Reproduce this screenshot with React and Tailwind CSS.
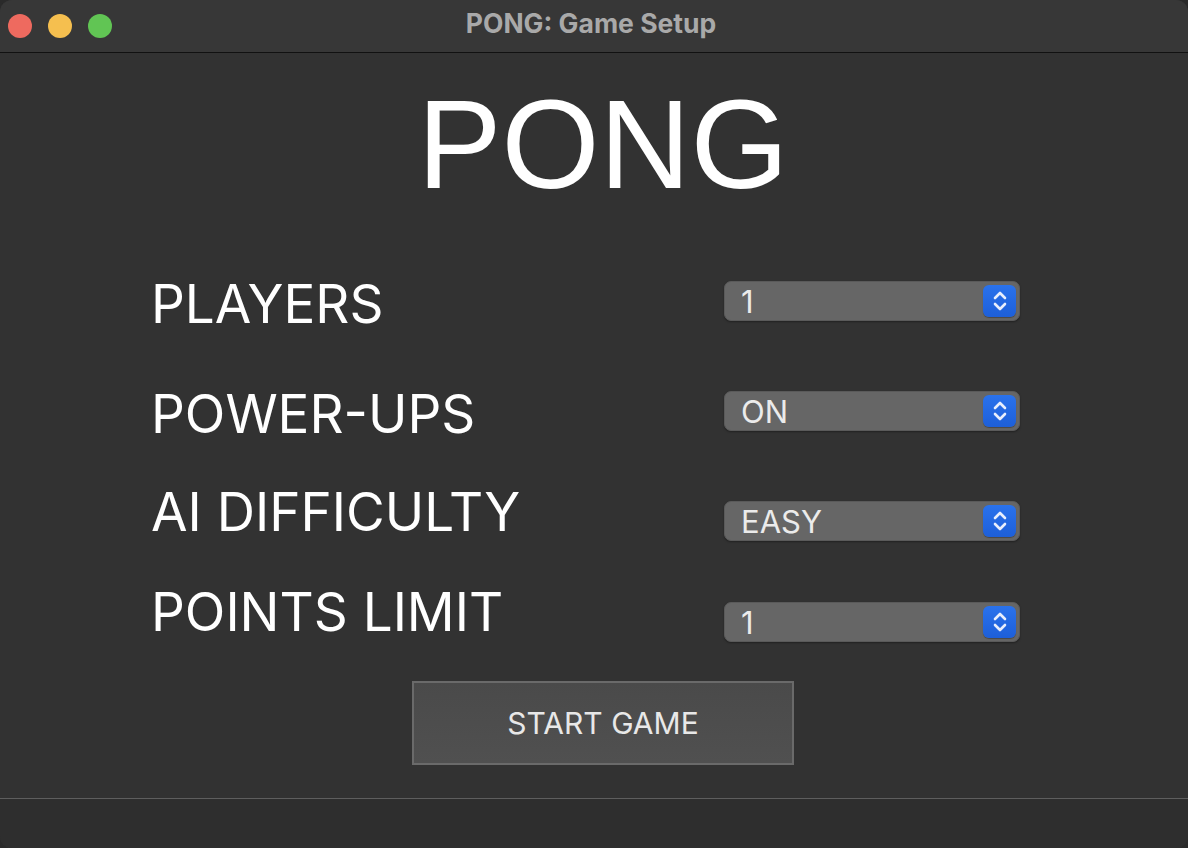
import React from "react";

function Stepper() {
  return (
    <div className="flex h-[32px] w-[33px] items-center justify-center rounded-[6px] bg-gradient-to-b from-[#2a72ec] to-[#1d5fd9] shadow-[0_1px_1px_rgba(0,0,0,0.3)]">
      <svg width="18" height="24" viewBox="0 0 18 24" fill="none" stroke="#e8eefc" strokeWidth="2.6" strokeLinecap="round" strokeLinejoin="round">
        <path d="M4 9 L9 4 L14 9" />
        <path d="M4 15 L9 20 L14 15" />
      </svg>
    </div>
  );
}

function Select({ value }) {
  return (
    <div className="flex h-[40px] w-[296px] items-center justify-between rounded-[7px] border border-[#5a5a5a] bg-[#666666] pl-[16px] pr-[3px] shadow-[0_1px_2px_rgba(0,0,0,0.35)]">
      <span className="text-[31px] leading-none text-[#ebebeb]" style={{ fontFamily: "Inter, 'Noto Sans', sans-serif" }}>{value}</span>
      <Stepper />
    </div>
  );
}

function Row({ label, value, className, labelClass }) {
  return (
    <div className={"flex h-[40px] items-start " + className}>
      <div className={"w-[573px] shrink-0 text-[53px] leading-none text-white " + labelClass} style={{ fontFamily: "Inter, 'Noto Sans', sans-serif" }}>{label}</div>
      <Select value={value} />
    </div>
  );
}

export default function App() {
  return (
    <div className="h-[848px] w-[1188px] overflow-hidden bg-[#2a2a2a]">
      <div className="flex h-[848px] w-[1188px] flex-col overflow-hidden rounded-[12px] bg-[#323232]">
        <div className="relative flex h-[53px] shrink-0 items-center border-b border-[#111111] bg-[#373737]">
          <div className="flex items-center gap-[16px] pl-[8px]">
            <div className="h-[24px] w-[24px] rounded-full bg-[#ee6a5f]" />
            <div className="h-[24px] w-[24px] rounded-full bg-[#f5bf4f]" />
            <div className="h-[24px] w-[24px] rounded-full bg-[#61c554]" />
          </div>
          <div className="absolute inset-x-0 top-0 flex h-[48px] items-center justify-center pr-[6px] text-[26.5px] font-bold text-[#a9a9a9]" style={{ fontFamily: "Inter, 'Noto Sans', sans-serif" }}>
            PONG: Game Setup
          </div>
        </div>
        <div className="flex flex-1 flex-col">
          <div className="mt-[29px] h-[126px] text-center pl-[18px] text-[126px] leading-none text-white" style={{ fontFamily: "'Liberation Sans', Arial, sans-serif" }}>
            PONG
          </div>
          <div className="mt-[73px] flex flex-col pl-[151px]">
            <Row label="PLAYERS" value="1" labelClass="-mt-[3px]" />
            <Row label="POWER-UPS" value="ON" className="mt-[70px]" labelClass="-mt-[3px]" />
            <Row label="AI DIFFICULTY" value="EASY" className="mt-[70px]" labelClass="-mt-[15px]" />
            <Row label="POINTS LIMIT" value="1" className="mt-[61px]" labelClass="-mt-[16px]" />
          </div>
          <button className="ml-[412px] mt-[39px] flex h-[84px] w-[382px] items-center justify-center border-2 border-[#6a6a6a] bg-gradient-to-b from-[#4a4a4a] to-[#505050] text-[30px] text-[#e8e8e8]" style={{ fontFamily: "Inter, 'Noto Sans', sans-serif" }}>
            START GAME
          </button>
        </div>
        <div className="h-[50px] shrink-0 border-t border-[#5e5e5e] bg-[#2e2e2e]" />
      </div>
    </div>
  );
}
